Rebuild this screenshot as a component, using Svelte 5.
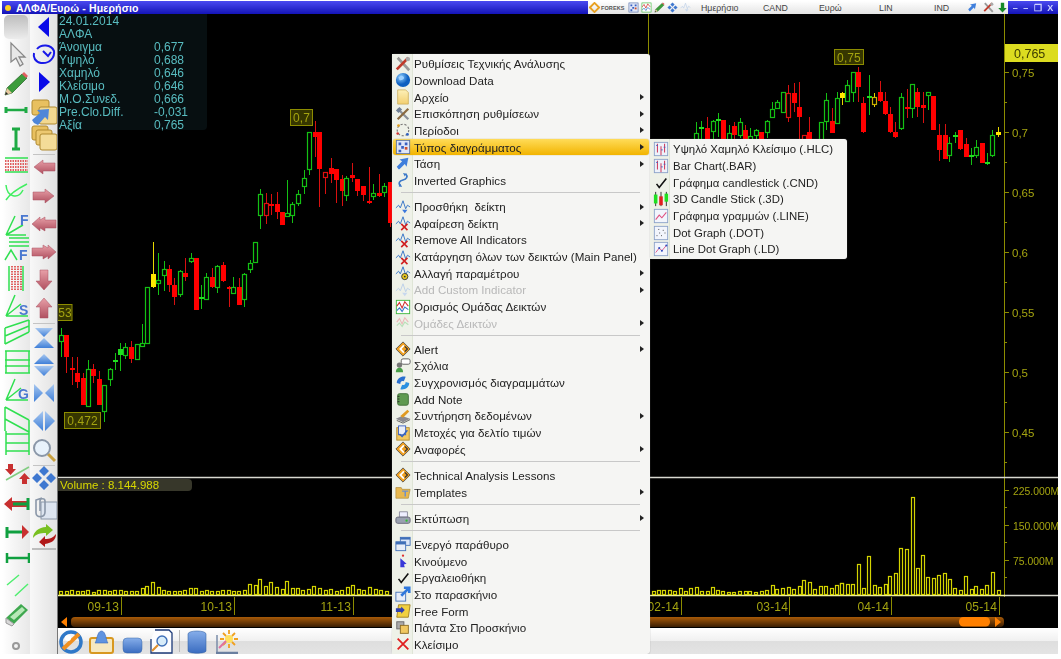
<script>
  const c1 = [
    [4,685,770,706,722,'g'],[20,705,818,705,770,'R'],[37,770,855,805,809,'R'],[53,770,865,820,846,'R'],[70,818,915,834,914,'R'],[85,780,920,808,918,'g'],[101,792,850,808,828,'R'],[117,812,915,838,914,'R'],[134,855,965,856,932,'g'],[150,805,858,808,838,'g'],[165,758,810,780,785,'G'],[182,728,813,748,766,'G'],[197,730,778,742,766,'g'],[215,722,788,742,778,'R'],[231,732,778,733,777,'g'],[248,672,740,730,738,'g'],[261,562,730,562,730,'g'],[280,425,565,522,560,'Y'],[296,460,585,541,549,'g'],[312,484,572,508,524,'g'],[329,495,575,508,555,'R'],[342,535,615,555,590,'R'],[360,510,590,512,582,'g'],[376,475,543,520,530,'R'],[393,460,490,474,483,'g'],[409,474,630,474,630,'R'],[424,555,628,592,596,'G'],[440,518,598,531,596,'g'],[456,505,565,531,560,'R'],[473,495,580,497,560,'g'],[490,486,545,496,544,'R'],[507,558,622,561,568,'R'],[521,530,582,562,580,'g'],[537,535,616,561,616,'R'],[554,520,620,523,596,'g'],[570,480,520,489,508,'g'],[587,425,485,425,485,'g'],[601,268,388,283,346,'g'],[618,278,372,310,346,'r'],[635,282,346,311,317,'R'],[651,275,358,311,335,'R'],[668,335,375,336,375,'R'],[682,240,350,340,349,'g'],[698,305,368,313,346,'g'],[715,270,318,283,310,'g'],[732,210,282,233,259,'g'],[748,97,224,97,207,'g'],[765,63,170,97,112,'R'],[779,97,322,97,207,'R'],[796,216,282,217,232,'r'],[813,174,250,203,221,'R'],[829,207,308,208,240,'R'],[846,225,318,238,274,'R'],[860,228,302,233,285,'g'],[877,188,245,226,234,'R'],[893,238,288,238,274,'R'],[910,258,302,258,285,'R'],[927,202,312,303,310,'R'],[940,252,300,278,288,'g'],[957,222,292,278,288,'R'],[973,248,292,258,276,'g'],[990,246,382,246,368,'R']
  ];
  const c2 = [
    [140,215,270,248,270,'g'],[155,212,270,230,234,'G'],[173,200,270,235,270,'R'],[190,210,270,214,242,'g'],[205,188,260,206,209,'G'],[221,210,270,210,270,'R'],[237,225,270,250,270,'g'],[254,215,270,227,255,'R'],[270,205,265,217,255,'g'],[287,225,270,240,270,'R'],[302,235,270,258,270,'g'],[318,238,270,240,254,'g'],[335,245,270,247,270,'R'],[351,210,265,212,246,'g'],[368,155,200,178,200,'g'],[381,150,175,155,173,'g'],[399,125,190,127,186,'g'],[415,105,215,128,200,'r'],[432,100,185,128,158,'R'],[449,95,270,172,200,'R'],[462,255,270,256,270,'r'],[479,200,270,247,270,'R'],[513,215,270,216,270,'g'],[529,130,240,150,212,'g'],[546,175,250,213,248,'R'],[561,125,220,145,220,'g'],[576,125,165,128,143,'Y'],[593,90,152,106,152,'g'],[609,65,155,67,127,'g'],[626,50,155,65,110,'R'],[640,140,250,160,246,'R'],[657,75,195,139,142,'G'],[674,130,172,140,162,'y'],[690,92,155,127,154,'R'],[707,125,195,154,192,'R'],[720,170,250,192,245,'R'],[737,215,265,247,262,'R'],[754,130,240,142,233,'g'],[771,118,205,172,176,'R'],[788,102,205,103,173,'g'],[803,115,200,127,172,'R'],[819,125,220,166,173,'R'],[835,127,180,127,136,'g'],[851,138,240,138,240,'R'],[868,222,332,256,301,'R'],[885,222,325,256,326,'R'],[899,262,335,280,315,'g'],[915,245,280,255,262,'G'],[932,240,300,241,298,'R'],[948,265,320,281,320,'R'],[965,295,345,316,320,'G'],[980,270,325,292,315,'g'],[996,280,338,280,338,'R'],[1013,310,345,336,342,'G'],[1028,240,320,256,315,'g'],[1046,230,262,247,255,'Y']
  ];
  const conv = (a, ox, oy) => a.map(([x, hi, lo, t, b, k]) => ({
    x: Math.floor(ox + x / 3) + 0.5,
    hi: Math.round(oy + hi / 3), lo: Math.round(oy + lo / 3),
    t: Math.round(oy + t / 3), b: Math.round(oy + b / 3), k
  }));
  const candles = [...conv(c1, 60, 100), ...conv(c2, 650, 50)];

  const v1 = [[183,3],[200,3],[216,4],[233,3],[248,3],[264,4],[281,2],[297,4],[315,4],[330,3],[345,4],[362,4],[378,3],[395,3],[411,3],[429,6],[442,8],[459,12],[476,7],[492,4],[508,3],[524,3],[540,3],[556,4],[573,6],[589,6],[605,3],[620,4],[636,3],[653,3],[669,4],[686,4],[701,3],[717,3],[734,4],[750,10],[767,9],[781,15],[798,8],[814,12],[831,7],[848,5],[862,13],[878,6],[893,6],[910,4],[926,5],[943,8],[960,6],[977,4],[993,5],[1010,3],[1026,4],[1043,7],[1060,9],[1077,5],[1093,4],[1110,7],[1127,5],[1143,4],[1160,3]];
  const v2 = [[12,3],[28,4],[42,4],[60,4],[76,3],[92,6],[109,3],[123,6],[140,7],[156,3],[174,3],[190,7],[204,4],[220,3],[237,2],[253,2],[270,3],[287,3],[301,3],[318,2],[335,3],[351,4],[368,9],[382,5],[399,6],[416,7],[432,5],[449,8],[462,14],[479,12],[495,5],[513,8],[529,8],[546,6],[560,9],[576,11]];
  const v3 = [[7,11],[23,10],[39,10],[57,30],[71,6],[87,38],[104,9],[120,7],[137,10],[150,18],[168,21],[184,46],[201,45],[218,97],[234,26],[248,39],[265,17],[282,16],[298,19],[315,21],[329,15],[345,6],[362,4],[379,18],[395,5],[409,8],[426,5],[442,9],[459,22],[476,4]];
  const bars = [
    ...v1.map(([x, h]) => ({ x: Math.round(x / 3), h })),
    ...v2.map(([x, h]) => ({ x: Math.round(650 + x / 3), h })),
    ...v3.map(([x, h]) => ({ x: Math.round(840 + x / 3), h }))
  ];

  const priceAxis = [[72,'0,75'],[132,'0,7'],[192,'0,65'],[252,'0,6'],[312,'0,55'],[372,'0,5'],[432,'0,45']];
  const volAxis = [[490,'225.000M'],[525,'150.000M'],[560,'75.000M']];
  const minor = [102,162,222,282,342,402,462,507,542,577];
  const dates = [[119,121,'09-13'],[232,234,'10-13'],[351,353,'11-13'],[679,681,'02-14'],[788,789,'03-14'],[889,891,'04-14'],[997,999,'05-14']];

  const info = [['24.01.2014',''],['ΑΛΦΑ',''],['Άνοιγμα','0,677'],['Υψηλό','0,688'],['Χαμηλό','0,646'],['Κλείσιμο','0,646'],['Μ.Ο.Συνεδ.','0,666'],['Pre.Clo.Diff.','-0,031'],['Αξία','0,765']];

  const wave = '<path d="M1 10l3-3 2 3 3-8 3 9 2-4 3 2" fill="none" stroke="#3a78c8" stroke-width="1.1"/>';
  const diamond = '<path d="M9 1l8 8-8 8-8-8z" fill="#f0a020" stroke="#333" stroke-width=".8"/><path d="M10 5L6 9l4 4" fill="none" stroke="#fff" stroke-width="2"/><path d="M11 6l3 3-3 3" fill="none" stroke="#333" stroke-width="1.4"/>';
  const barsIcon = '<rect x="1.5" y="1.5" width="15" height="15" fill="#eef2fa" stroke="#8aa0c8"/><path d="M5 3v10M9 6v10M13 3v10" stroke="#d04060" stroke-width="1.2"/><path d="M3.500 5h2M9 10h2M12 7h2" stroke="#4060c0"/>';
  const icons = {
    tools: '<path d="M3 2l13 14" stroke="#999" stroke-width="3"/><path d="M15 2L2 15" stroke="#c03a2a" stroke-width="3"/><circle cx="14.500" cy="3.500" r="2.500" fill="#aaa"/>',
    globe: '<circle cx="9" cy="9" r="8" fill="url(#gGlobe)"/><path d="M4 6c3-3 5-2 6 0s-3 4-5 3z" fill="#9cd0ff"/>',
    file: '<path d="M3 1h9l3 3v13H3z" fill="url(#gFile)" stroke="#c8a850" stroke-width=".8"/>',
    tools2: '<path d="M3 3l12 12" stroke="#8a8f98" stroke-width="2.500"/><path d="M15 3L3 15" stroke="#8a6a40" stroke-width="2.500"/><path d="M1 5l4-4 3 3-4 4z" fill="#6f7f95"/>',
    period: '<circle cx="9" cy="9" r="6.500" fill="none" stroke="#777" stroke-width="1.300" stroke-dasharray="2.500 2"/><circle cx="4" cy="4" r="1.600" fill="#e0a020"/><circle cx="14" cy="14" r="1.600" fill="#3060c0"/><circle cx="3" cy="13" r="1.400" fill="#d03030"/>',
    chart: '<rect x="1.500" y="1.500" width="15" height="15" fill="#dfe6f8" stroke="#5570a8"/><path d="M4 4h3v3H4zM11 4h3v3h-3zM7 8h3v3H7zM4 12h3v3H4z" fill="#3a60c0"/><path d="M11 9h3v3h-3z" fill="#d05030"/>',
    arrow: '<path d="M4 15l-2-3 6-6-3-2 10-2-2 10-2-3-6 6z" fill="#3f7fdc"/>',
    invert: '<path d="M12 2c3 3 1 6-3 7s-6 4-3 7" fill="none" stroke="#3a78c8" stroke-width="1.800"/><path d="M9 1l4 1-2 3zM8 17l-4-1 2-3z" fill="#3a78c8"/>',
    indAdd: wave + '<path d="M11 16l-3-4h6z" fill="#3a78dc"/>',
    indX: wave + '<path d="M7 10l7 7M14 10l-7 7" stroke="#d02020" stroke-width="1.800"/>',
    indGear: wave + '<circle cx="11" cy="13" r="3.500" fill="#e8c820" stroke="#333"/><circle cx="11" cy="13" r="1" fill="#333"/>',
    indGray: '<path d="M1 10l3-3 2 3 3-8 3 9 2-4 3 2" fill="none" stroke="#bcd0e8" stroke-width="1.100"/><path d="M11 16l-3-4h6z" fill="#c8d8ee"/>',
    group: '<rect x="1.500" y="1.500" width="15" height="15" fill="#fff" stroke="#3ab83a"/><path d="M2 8l3-4 3 6 3-7 4 5" fill="none" stroke="#d03030" stroke-width="1.200"/><path d="M2 13l3-3 3 4 3-5 4 3" fill="none" stroke="#3a78c8" stroke-width="1.200"/>',
    groupGray: '<path d="M2 8l3-4 3 6 3-7 4 5" fill="none" stroke="#eab8b8" stroke-width="1.200"/><path d="M2 12l3-3 3 4 3-5 4 3" fill="none" stroke="#b8e0b8" stroke-width="1.200"/>',
    alert: diamond,
    chat: '<rect x="7" y="1" width="10" height="6" rx="2" fill="#fff" stroke="#555"/><circle cx="5" cy="8" r="3" fill="#777"/><path d="M1 16c0-4 2-5 4-5s4 1 4 5z" fill="#48a048"/>',
    sync: '<path d="M2 9c0-5 5-8 10-7l-2 5C7 6 6 8 6 10z" fill="#2a70d0"/><path d="M16 9c0 5-5 8-10 7l2-5c3 1 4-1 4-3z" fill="#2a90e0"/>',
    note: '<rect x="3" y="3" width="12" height="13" rx="2" fill="#5f9a50" stroke="#3d6c35"/><path d="M3 6h2M3 9h2M3 12h2" stroke="#222"/>',
    maint: '<path d="M1 12l7-3 9 3-8 4z" fill="#8a8a90"/><path d="M6 9l8-7 2 2-7 7z" fill="#e09a20"/><path d="M2 14l7 3 8-4" fill="none" stroke="#555"/>',
    check2: '<rect x="2" y="3" width="14" height="14" fill="#f2c860" stroke="#b08a30"/><rect x="4" y="1" width="8" height="10" fill="#e8eefa" stroke="#3a60c0"/><path d="M5 10l3 3 6-7" fill="none" stroke="#3060c0" stroke-width="1.600"/>',
    folder: '<path d="M1 4h6l1 2h9l-2 10H1z" fill="#e8b850" stroke="#a88430" stroke-width=".7"/><path d="M8 8h7M11.500 8v6" stroke="#6a8fd0" stroke-width="1.600"/>',
    print: '<path d="M5 2h9v6H5z" fill="#eef"  stroke="#889"/><rect x="1" y="8" width="16" height="7" rx="2" fill="#9aa2b0" stroke="#667"/><circle cx="13" cy="12" r="1.300" fill="#30c030"/>',
    win: '<rect x="6" y="1.500" width="11" height="9" fill="#dbe6f8" stroke="#3f6fb8"/><rect x="6" y="1.500" width="11" height="2.500" fill="#3f6fb8"/><rect x="1" y="6.500" width="11" height="10" fill="#e8eef9" stroke="#3f6fb8"/><rect x="1" y="6.500" width="11" height="3" fill="#3f6fb8"/>',
    move: '<path d="M6 16V6l7 6-3 1 1 3z" fill="#3838d8"/><circle cx="9" cy="3" r="1.300" fill="#e03030"/>',
    check: '<path d="M4 10l3 4 8-10" fill="none" stroke="#111" stroke-width="1.800"/>',
    bg: '<rect x="1" y="7" width="11" height="10" fill="#e8eef9" stroke="#3f6fb8"/><path d="M7 11L15 3M10 2h6v6" fill="none" stroke="#2f78dc" stroke-width="3"/>',
    free: '<path d="M4 2h13l-2 14H2z" fill="#f0d040" stroke="#a08020"/><path d="M1 6h6v-2l4 4-4 4v-2H1z" fill="#3040b0"/>',
    front: '<rect x="2" y="2" width="8" height="8" fill="#aaa" stroke="#666"/><rect x="6" y="6" width="9" height="9" fill="#f0c860" stroke="#8a6a20"/>',
    close: '<path d="M3 3l12 12M15 3L3 15" stroke="#e02020" stroke-width="2"/>',
    hlc: barsIcon,
    candle: '<path d="M3 1v16M9 1v16M15 1v16" stroke="#222"/><rect x="1" y="4" width="4" height="10" fill="#20e020"/><rect x="7" y="6" width="4" height="10" fill="#e02020"/><rect x="13" y="3" width="4" height="9" fill="#20e020"/>',
    line: '<rect x="1.500" y="1.500" width="15" height="15" fill="#f2f5fc" stroke="#8aa0c8"/><path d="M3 13l4-5 3 3 5-6" fill="none" stroke="#e05080" stroke-width="1.200"/>',
    dot: '<rect x="1.500" y="1.500" width="15" height="15" fill="#f2f5fc" stroke="#8aa0c8"/><path d="M4 12h1M7 9h1M9 12h1M11 6h1M13 9h1M6 5h1" stroke="#333" stroke-dasharray="1 1"/>',
    lined: '<rect x="1.500" y="1.500" width="15" height="15" fill="#f2f5fc" stroke="#8aa0c8"/><path d="M3 13l4-5 3 3 5-6" fill="none" stroke="#e05080"/><circle cx="7" cy="8" r="1.200" fill="#3050c0"/><circle cx="10" cy="11" r="1.200" fill="#3050c0"/><circle cx="15" cy="5" r="1.200" fill="#3050c0"/>',

    blank: '<rect x="1" y="1" width="24" height="24" rx="5" fill="url(#gBlank)"/>',
    cursor: '<path d="M8 1v19l5-4 4 8 3-2-4-7h6z" fill="#e8e8e8" stroke="#888" stroke-width="1.300"/>',
    pencil: '<path d="M2 24l2-7L19 3l5 4-15 15z" fill="#3c9c3c" stroke="#1f5f1f" stroke-width=".7"/><path d="M19 3l2-2 4 4-2 2z" fill="#e06060"/><path d="M2 24l2-7 5 5z" fill="#e8c8a0"/><path d="M2 24l1-3 2 2z" fill="#222"/>',
    hbar: '<path d="M3 13h20" stroke="#1eaa44" stroke-width="2.500"/><path d="M3 10v6M23 10v6" stroke="#1eaa44" stroke-width="3"/>',
    vbar: '<path d="M13 2v22" stroke="#1eaa44" stroke-width="3"/><path d="M9 3h8M9 23h8" stroke="#1eaa44" stroke-width="3"/>',
    grid: '<path d="M2 6h23M2 20h23" stroke="#30e050" stroke-width="1.500"/><path d="M2 9h23M2 12h23M2 15h23M2 18h23" stroke="#e06060" stroke-width="1.800" stroke-dasharray="1.500 1"/>',
    curves: '<path d="M3 5c1 12 12 15 17 5M3 20C8 12 18 7 24 4" fill="none" stroke="#40ee60" stroke-width="1.500"/>',
    fan: '<path d="M3 24L12 5M3 24L20 14M3 24h20" fill="none" stroke="#30e050" stroke-width="1.500"/><text x="17" y="14" class="ico-l">F</text>',
    afib: '<path d="M6 2h20M6 6h20M6 10h20" stroke="#30e050" stroke-width="1.500"/><path d="M2 24l6-10 6 10" fill="none" stroke="#30e050" stroke-width="1.500"/><text x="16" y="24" class="ico-l">F</text>',
    dotsv: '<path d="M6 1v25M20 1v25" stroke="#30e050" stroke-width="1.500"/><path d="M9 1v25M12 1v25M15 1v25M18 1v25" stroke="#e06060" stroke-width="2" stroke-dasharray="1.500 1"/>',
    fanS: '<path d="M3 24L12 3M3 24L18 12M3 24h22" fill="none" stroke="#30e050" stroke-width="1.500"/><text x="16" y="23" class="ico-l">S</text>',
    chan: '<path d="M2 8L26 0M2 24L26 12M2 8v16M26 0v12M2 16L26 6" fill="none" stroke="#30e050" stroke-width="1.500"/>',
    hgrid: '<path d="M2 3h25M2 12h25M2 18h25M2 25h25M3 3v22M26 3v22" fill="none" stroke="#30e050" stroke-width="1.500"/>',
    fanG: '<path d="M3 24L12 3M3 24L18 12M3 24h22" fill="none" stroke="#30e050" stroke-width="1.500"/><text x="15" y="23" class="ico-l">G</text>',
    chan2: '<path d="M2 2l24 13M2 14l24 13M2 2v24M26 15v11" fill="none" stroke="#30e050" stroke-width="1.500"/>',
    ladder: '<path d="M3 1v24M26 1v24M3 4h23M3 13h23M3 21h23" fill="none" stroke="#30e050" stroke-width="1.500"/>',
    rgdiag: '<path d="M3 19L26 6" stroke="#80cc80" stroke-width="1.500"/><path d="M5 3h5v5h3l-5.500 6L2 8h3z" fill="#c83030"/><path d="M19 23h5v-5h3l-5.500-6-5.500 6h3z" fill="#c83030"/>',
    redI: '<path d="M1 13l8-7v4h16v6H9v4z" fill="#c83030"/><path d="M25 7v12" stroke="#10a040" stroke-width="3"/><path d="M10 13h15" stroke="#10a040" stroke-width="3"/>',
    greenI: '<path d="M26 13l-7-7v14z" fill="#c83030"/><path d="M4 8v11M4 13h15" stroke="#10a040" stroke-width="3"/>',
    hbar2: '<path d="M4 13h22" stroke="#10a040" stroke-width="2.500"/><path d="M4 8v10M26 8v10" stroke="#10a040" stroke-width="2.500"/>',
    diag: '<path d="M4 12L16 2M12 23L25 11" stroke="#50ee70" stroke-width="1.500"/>',
    eraser: '<path d="M3 17L18 3l7 6-14 14z" fill="#3fa84f"/><path d="M3 17l8 6-2 2-6-3z" fill="#d8d8d8" stroke="#999"/><path d="M7 16L19 6l3 3-11 10z" fill="#b8e8b8"/>',
    dotc: '<circle cx="13" cy="13" r="3" fill="none" stroke="#999" stroke-width="2"/>',

    tl: '<path d="M18 3v20L7 13z" fill="#0a0ae8"/>',
    loop: '<path d="M6 7c4-5 14-5 17 2 1 6-4 13-13 12-6-1-8-6-7-10" fill="none" stroke="#1818e8" stroke-width="2"/><path d="M12 9l5 5 3-4" fill="none" stroke="#1818e8" stroke-width="2"/>',
    tr: '<path d="M8 3v20l11-10z" fill="#0a0ae8"/>',
    fold1: '<rect x="1" y="1" width="17" height="15" rx="2" fill="#e8c060" stroke="#b08a30"/><rect x="8" y="8" width="18" height="17" rx="2" fill="#f2d890" stroke="#b08a30"/><path d="M3 24l-2-3 8-7-3-3 12-1-1 11-3-3-7 8z" fill="#4f86d8"/>',
    fold2: '<rect x="1" y="1" width="16" height="14" rx="2" fill="#e8c060" stroke="#b08a30"/><rect x="5" y="5" width="16" height="15" rx="2" fill="#ecc870" stroke="#b08a30"/><rect x="9" y="9" width="17" height="16" rx="2" fill="#f4dc98" stroke="#b08a30"/>',
    aL: '<path d="M3 13l9-7v3h12v8H12v3z" fill="url(#gRed)" stroke="#a85060" stroke-width=".5"/>',
    aR: '<path d="M23 13l-9-7v3H2v8h12v3z" fill="url(#gRed)" stroke="#a85060" stroke-width=".5"/>',
    aLL: '<path d="M1 13l8-7v3l5-3v3h11v8H14v3l-5-3v3z" fill="url(#gRed)" stroke="#a85060" stroke-width=".5"/>',
    aRR: '<path d="M25 13l-8-7v3l-5-3v3H1v8h11v3l5-3v3z" fill="url(#gRed)" stroke="#a85060" stroke-width=".5"/>',
    aD: '<path d="M13 23l-8-9h4V3h8v11h4z" fill="url(#gRed)" stroke="#a85060" stroke-width=".5"/>',
    aU: '<path d="M13 3l-8 9h4v11h8V12h4z" fill="url(#gRed)" stroke="#a85060" stroke-width=".5"/>',
    hour: '<path d="M4 3h18l-9 9z" fill="url(#gBlue)"/><path d="M3 23l10-10 10 10z" fill="url(#gBlue)"/>',
    dia: '<path d="M13 2l10 10H3z" fill="url(#gBlue)"/><path d="M3 14h20L13 24z" fill="url(#gBlue)"/>',
    bow: '<path d="M3 4l9 9-9 9z" fill="url(#gBlue)"/><path d="M23 4l-9 9 9 9z" fill="url(#gBlue)"/>',
    diaV: '<path d="M12 3v20L2 13z" fill="url(#gBlue)"/><path d="M14 3v20l10-10z" fill="url(#gBlue)"/>',
    mag: '<path d="M17 17l7 7" stroke="#c8a040" stroke-width="3"/><circle cx="11" cy="11" r="8" fill="#e8f2fb" stroke="#8a97a8" stroke-width="2"/>',
    cross: '<path d="M13 1l5 5-5 5-5-5zM13 15l5 5-5 5-5-5zM6 8l5 5-5 5-5-5zM20 8l5 5-5 5-5-5z" fill="#3f78d0"/>',
    clip: '<rect x="10" y="8" width="16" height="17" fill="#dde5f0" stroke="#8a97a8"/><path d="M11 4l-6 2v13c0 5 9 5 9-1V7c0-3-5-3-5 0v10" fill="none" stroke="#8a97a8" stroke-width="1.600"/>',
    swap: '<path d="M2 15c0-6 6-11 13-11V1l7 6-7 6v-3C9 10 5 11 2 15z" fill="#78c020"/><path d="M25 11c0 6-4 9-11 10v3l-6-5 6-6v3c5 0 8-1 11-5z" fill="#b01818"/><path d="M1 26h24" stroke="#999" stroke-width="1.200"/>'
  };
  const col1 = [['blank',26.5],['cursor',55],['pencil',84],['hbar',110],['vbar',139],['grid',165],['curves',193],['fan',224],['afib',249],['dotsv',278],['fanS',305],['chan',333],['hgrid',361],['fanG',389],['chan2',418],['ladder',443],['rgdiag',474],['redI',504],['greenI',532],['hbar2',558],['diag',586],['eraser',614],['dotc',646]];
  const col2 = [['tl',27],['loop',55],['tr',82],['fold1',112],['fold2',138],['aL',167],['aR',196],['aLL',224],['aRR',252],['aD',280],['aU',308],['hour',338],['dia',365],['bow',393],['diaV',421],['mag',450],['cross',478],['clip',507],['swap',536]];
  const slots = (arr) => arr.map(([n, c], i) => ({ n, mt: i === 0 ? c - 14 - 13 : c - arr[i - 1][1] - 26 }));
  const slots1 = slots(col1), slots2 = slots(col2);

  const menu = [
    { t: 'Ρυθμίσεις Τεχνικής Ανάλυσης', i: 'tools' },
    { t: 'Download Data', i: 'globe' },
    { t: 'Αρχείο', i: 'file', s: 1 },
    { t: 'Επισκόπηση ρυθμίσεων', i: 'tools2', s: 1 },
    { t: 'Περίοδοι', i: 'period', s: 1 },
    { t: 'Τύπος διαγράμματος', i: 'chart', s: 1, a: 1 },
    { t: 'Τάση', i: 'arrow', s: 1 },
    { t: 'Inverted Graphics', i: 'invert' },
    { sep: 1 },
    { t: 'Προσθήκη  δείκτη', i: 'indAdd', s: 1 },
    { t: 'Αφαίρεση δείκτη', i: 'indX', s: 1 },
    { t: 'Remove All Indicators', i: 'indX' },
    { t: 'Κατάργηση όλων των δεικτών (Main Panel)', i: 'indX' },
    { t: 'Αλλαγή παραμέτρου', i: 'indGear', s: 1 },
    { t: 'Add Custom Indicator', i: 'indGray', s: 1, d: 1 },
    { t: 'Ορισμός Ομάδας Δεικτών', i: 'group' },
    { t: 'Ομάδες Δεικτών', i: 'groupGray', s: 1, d: 1 },
    { sep: 1 },
    { t: 'Alert', i: 'alert', s: 1 },
    { t: 'Σχόλια', i: 'chat' },
    { t: 'Συγχρονισμός διαγραμμάτων', i: 'sync' },
    { t: 'Add Note', i: 'note' },
    { t: 'Συντήρηση δεδομένων', i: 'maint', s: 1 },
    { t: 'Μετοχές για δελτίο τιμών', i: 'check2' },
    { t: 'Αναφορές', i: 'alert', s: 1 },
    { sep: 1 },
    { t: 'Technical Analysis Lessons', i: 'alert' },
    { t: 'Templates', i: 'folder', s: 1 },
    { sep: 1 },
    { t: 'Εκτύπωση', i: 'print', s: 1 },
    { sep: 1 },
    { t: 'Ενεργό παράθυρο', i: 'win' },
    { t: 'Κινούμενο', i: 'move' },
    { t: 'Εργαλειοθήκη', i: 'check' },
    { t: 'Στο παρασκήνιο', i: 'bg' },
    { t: 'Free Form', i: 'free' },
    { t: 'Πάντα Στο Προσκήνιο', i: 'front' },
    { t: 'Κλείσιμο', i: 'close' }
  ];
  const sub = [
    { t: 'Υψηλό Χαμηλό Κλείσιμο (.HLC)', i: 'hlc' },
    { t: 'Bar Chart(.BAR)', i: 'hlc' },
    { t: 'Γράφημα candlestick (.CND)', i: 'check' },
    { t: '3D Candle Stick (.3D)', i: 'candle' },
    { t: 'Γράφημα γραμμών (.LINE)', i: 'line' },
    { t: 'Dot Graph (.DOT)', i: 'dot' },
    { t: 'Line Dot Graph (.LD)', i: 'lined' }
  ];
  const bottomIcons = ['gl', 'bell', 'box', 'doc', 'div', 'cyl', 'sun'];
  const bi = {
    gl: '<circle cx="12" cy="13" r="10" fill="none" stroke="#2f78c8" stroke-width="3.500"/><path d="M4 20L20 5" stroke="#f09020" stroke-width="4"/><circle cx="9" cy="9" r="3" fill="#fff"/>',
    bell: '<rect x="1" y="9" width="23" height="15" rx="2" fill="#f6e8c0" stroke="#d89820" stroke-width="2"/><path d="M6 14c2-2 2-12 6.500-12S17 12 19 14z" fill="#5f93e0" stroke="#3a68b8" stroke-width=".6"/>',
    box: '<rect x="4" y="9" width="19" height="15" rx="4" fill="url(#gCyl)" stroke="#3a68a8" stroke-width=".5"/>',
    doc: '<path d="M6 1h14l3 3v20H2V10" fill="#fdfdff" stroke="#1c3a78" stroke-width="1.300"/><circle cx="13" cy="12" r="5" fill="#d8ecfa" stroke="#3f6fb8" stroke-width="1.400"/><path d="M9 16l-6 6" stroke="#e09030" stroke-width="2.200"/>',
    cyl: '<path d="M3 5c0-4 18-4 18 0v17c0 3-18 3-18 0z" fill="url(#gCyl)" stroke="#3a68a8" stroke-width=".6"/>',
    sun: '<path d="M2 24V6" stroke="#7a8ca8" stroke-width="1.500"/><path d="M1 24h22" stroke="#6a7fa0" stroke-width="2.500"/><circle cx="14" cy="10" r="4" fill="#ffe060"/><path d="M14 1v4M14 15v4M5 10h4M19 10h4M8 4l3 3M20 4l-3 3M8 16l3-3M20 16l-3-3" stroke="#f0a020" stroke-width="1.800"/><path d="M4 19l7-7" stroke="#e070a0" stroke-width="2"/>'
  };
</script>

<div class="app">
  <header class="title">
    <div class="caption"><span class="led"></span><span>ΑΛΦΑ/Ευρώ - Ημερήσιο</span></div>
    <div class="tools">
      <span class="logo"><svg viewBox="0 0 12 12" class="ti"><path d="M6 1L1 6l5 5 5-5z" fill="none" stroke="#e8a020" stroke-width="2"/></svg><b>FOREKS</b></span>
      <svg viewBox="0 0 18 18" class="ti">{@html icons.chart}</svg>
      <svg viewBox="0 0 18 18" class="ti">{@html icons.group}</svg>
      <svg viewBox="0 0 26 26" class="ti">{@html icons.pencil}</svg>
      <svg viewBox="0 0 26 26" class="ti">{@html icons.cross}</svg>
      <svg viewBox="0 0 18 18" class="ti">{@html icons.indGray}</svg>
      <span class="tt t1">Ημερήσιο</span><span class="tt t2">CAND</span><span class="tt t3">Ευρώ</span><span class="tt t4">LIN</span><span class="tt t5">IND</span>
      <svg viewBox="0 0 18 18" class="ti r1">{@html icons.arrow}</svg>
      <svg viewBox="0 0 18 18" class="ti r2">{@html icons.tools}</svg>
      <svg viewBox="0 0 26 26" class="ti r3"><path d="M13 25l-10-11h6V2h8v12h6z" fill="#168a28"/></svg>
    </div>
    <div class="winbtns"><span>–</span><span>–</span><span class="rs">❐</span><span>X</span></div>
  </header>

  <div class="body">
    <aside class="col c1">
      {#each slots1 as s}
        <svg class="tb" viewBox="0 0 26 26" style:margin-top="{s.mt}px">{@html icons[s.n]}</svg>
      {/each}
    </aside>
    <aside class="col c2">
      {#each slots2 as s}
        <svg class="tb" viewBox="0 0 26 26" style:margin-top="{s.mt}px">{@html icons[s.n]}</svg>
      {/each}
      <i class="csep s1"></i><i class="csep s2"></i><i class="csep s3"></i>
    </aside>

    <main class="main">
      <div class="chart">
        <svg class="plot" viewBox="58 14 1000 614" width="1000" height="614">
          <defs>
            <linearGradient id="gBlank" x1="0" y1="0" x2="0" y2="1"><stop offset="0" stop-color="#bdbdbd"/><stop offset="1" stop-color="#ececec"/></linearGradient>
            <radialGradient id="gGlobe" cx=".35" cy=".3"><stop offset="0" stop-color="#8fd0ff"/><stop offset="1" stop-color="#0d5fc0"/></radialGradient>
            <linearGradient id="gFile" x1="0" y1="0" x2="0" y2="1"><stop offset="0" stop-color="#fdf0b8"/><stop offset="1" stop-color="#f2cf70"/></linearGradient>
            <linearGradient id="gRed" x1="0" y1="0" x2="0" y2="1"><stop offset="0" stop-color="#e8a0a8"/><stop offset="1" stop-color="#b05060"/></linearGradient>
            <linearGradient id="gBlue" x1="0" y1="0" x2="0" y2="1"><stop offset="0" stop-color="#a8c8f0"/><stop offset="1" stop-color="#3f7fd8"/></linearGradient>
            <linearGradient id="gCyl" x1="0" y1="0" x2="0" y2="1"><stop offset="0" stop-color="#86aeea"/><stop offset="1" stop-color="#3a6cc0"/></linearGradient>
            <linearGradient id="gScroll" x1="0" y1="0" x2="0" y2="1"><stop offset="0" stop-color="#a85a08"/><stop offset="1" stop-color="#3a1e04"/></linearGradient>
          </defs>
          <path d="M648.500 14v50" class="ol"/>
          <path d="M1004.500 14v583" class="ol"/>
          {#each candles as c}
            <path d="M{c.x} {c.hi}V{c.lo}" class="w {c.k}"/>
            {#if c.k === 'g' || c.k === 'r' || c.k === 'y'}
              <rect x={c.x - 2} y={c.t + .5} width="4" height={Math.max(c.b - c.t, 2)} class="o {c.k}"/>
            {:else}
              <rect x={c.x - 2.5} y={c.t} width="5" height={Math.max(c.b - c.t, 2)} class="f {c.k}"/>
            {/if}
          {/each}

          <path d="M58 477.500h1000" class="wl"/>
          <path d="M1004.500 595.500h54" class="wl"/>
          <path d="M58 595.500h947" class="bl"/>
          {#each bars as b}
            <rect x={b.x - 1.5} y={594.5 - b.h} width="3" height={b.h} class="vb"/>
          {/each}

          {#each priceAxis as [y, t]}
            <path d="M1004 {y}.5h5" class="ol"/>
            <text x="1012" y={y + 4.5} class="ax ps">{t}</text>
          {/each}
          {#each volAxis as [y, t]}
            <path d="M1004 {y}.5h5" class="ol"/>
            <text x="1013" y={y + 4.5} class="ax vs">{t}</text>
          {/each}
          {#each minor as y}
            <path d="M1004 {y}.5h3" class="ol"/>
          {/each}
          <rect x="1005" y="44" width="53" height="18" class="pl"/>
          <text x="1014" y="57.500" class="plt">0,765</text>

          {#each dates as [x, tx, t]}
            <text x={x} y="611" class="ax end">{t}</text>
            <path d="M{tx + .5} 597v18" class="ol"/>
          {/each}

          <path d="M67 617v10l-6-5z" class="orng"/>
          <rect x="71" y="617" width="933" height="10" rx="4" fill="url(#gScroll)" />
          <rect x="959" y="617" width="31" height="9.500" rx="4.500" class="orng"/>
          <path d="M995 617v10l6-5z" class="orng"/>

          <rect x="290.500" y="109.500" width="22" height="16" class="tag"/>
          <text x="301.500" y="122" class="tt2">0,7</text>
          <rect x="834.500" y="49.500" width="29" height="15" class="tag"/>
          <text x="849" y="61.500" class="tt2">0,75</text>
          <rect x="50" y="304.500" width="22" height="16" class="tag"/>
          <text x="65" y="317" class="tt2">53</text>
          <rect x="64.500" y="412.500" width="36" height="16" class="tag"/>
          <text x="82.500" y="425" class="tt2">0,472</text>
        </svg>

        <div class="info">
          {#each info as [a, b]}
            <div class="irow"><span class="il">{a}</span><span>{b}</span></div>
          {/each}
        </div>
        <div class="volume">Volume : 8.144.988</div>

        <nav class="menu">
          {#each menu as m}
            {#if m.sep}
              <div class="sp"></div>
            {:else}
              <div class="row" class:active={m.a} class:dis={m.d}>
                <svg class="mi" viewBox="0 0 18 18">{@html icons[m.i]}</svg>
                <span class="lbl">{m.t}</span>
                {#if m.s}<span class="tri"></span>{/if}
              </div>
            {/if}
          {/each}
        </nav>

        <nav class="submenu">
          {#each sub as m}
            <div class="row sr">
              <svg class="mi" viewBox="0 0 18 18">{@html icons[m.i]}</svg>
              <span class="lbl">{m.t}</span>
            </div>
          {/each}
        </nav>
      </div>

      <footer class="bottom">
        {#each bottomIcons as n}
          {#if n === 'div'}
            <i class="bdiv"></i>
          {:else}
            <svg class="bi" viewBox="0 0 25 25">{@html bi[n]}</svg>
          {/if}
        {/each}
      </footer>
    </main>
  </div>
</div>

<style>
  :global(body) { margin: 0; background: #fff; }
  .app {
    width: 1056px; height: 653px; margin: 1px 0 0 2px;
    display: flex; flex-direction: column; overflow: hidden;
    font-family: "Liberation Sans", Arial, sans-serif;
    filter: blur(0.35px);
  }
  .title {
    height: 13px; flex: none; display: flex; align-items: stretch;
    background: linear-gradient(#4a4af0, #1414b8); color: #fff;
  }
  .caption {
    width: 586px; flex: none; display: flex; align-items: center; gap: 5px; padding-left: 3px; box-sizing: border-box;
    font-size: 10.500px; font-weight: bold; letter-spacing: .15px;
  }
  .led { width: 6px; height: 6px; border-radius: 50%; background: #ffd020; }
  .tools {
    width: 420px; flex: none; display: flex; align-items: center; gap: 2px; overflow: hidden;
    background: linear-gradient(#fff, #e4e4e4); color: #444; font-size: 9px; padding-left: 1px; box-sizing: border-box;
  }
  .ti { width: 11px; height: 11px; flex: none; }
  .logo { display: flex; align-items: center; gap: 1px; width: 37px; flex: none; }
  .logo b { font-size: 5.500px; color: #555; letter-spacing: .1px; }
  .tt { flex: none; font-size: 8.800px; color: #444; }
  .t1 { margin-left: 8px; width: 36px; } .t2 { margin-left: 24px; width: 24px; } .t3 { margin-left: 30px; width: 22px; }
  .t4 { margin-left: 36px; width: 14px; } .t5 { margin-left: 39px; width: 16px; }
  .r1 { margin-left: 15px; } .r2 { margin-left: 3px; } .r3 { margin-left: 1px; }
  .winbtns {
    flex: 1; display: flex; align-items: center; justify-content: space-around; padding: 0 2px;
    color: #cfd4ff; font-size: 9px; font-weight: bold;
  }
  .body { flex: 1; display: flex; min-height: 0; }
  .col {
    flex: none; display: flex; flex-direction: column; align-items: center; overflow: hidden; position: relative;
    box-sizing: border-box;
  }
  .c1 { width: 28px; background: linear-gradient(90deg, #fff, #e8e8e8); }
  .c2 { width: 28px; background: linear-gradient(90deg, #f8f8f8, #e2e2e2); border-right: 1px solid #777; }
  .tb { width: 26px; height: 26px; flex: none; overflow: visible; }
  .csep { position: absolute; left: 3px; width: 22px; height: 1px; background: #c4c4c4; }
  .s1 { top: 140px; } .s2 { top: 309px; } .s3 { top: 451px; }
  :global(.ico-l) { font: bold 14px "Liberation Sans", sans-serif; fill: #4a78d0; }

  .main { flex: 1; display: flex; flex-direction: column; min-width: 0; }
  .chart { flex: none; height: 614px; background: #000; position: relative; z-index: 1; }
  .plot { display: block; }
  .w { stroke-width: 1; fill: none; }
  .w.g, .w.G { stroke: #14c014; }
  .w.R, .w.r { stroke: #d81010; }
  .w.Y, .w.y { stroke: #e8d800; }
  .o { stroke-width: 1.200; }
  .o.g { stroke: #14c014; fill: #000; }
  .o.r { stroke: #e01010; fill: #000; }
  .o.y { stroke: #c8b000; fill: #000; }
  .f.R { fill: #ff0000; } .f.G { fill: #20e020; } .f.Y { fill: #ffe800; }
  .ol { stroke: #8c8c00; fill: none; }
  .wl { stroke: #d8d8d0; fill: none; stroke-width: 1.500; }
  .bl { stroke: #f0f0a0; stroke-width: 1.500; fill: none; }
  .vb { fill: #000; stroke: #d4d400; stroke-width: 1.200; }
  .ax { fill: #a4a410; font-size: 12px; letter-spacing: .15px; }
  .ps { font-size: 11.500px; letter-spacing: 0; }
  .vs { font-size: 10.400px; letter-spacing: 0; }
  .end { text-anchor: end; }
  .pl { fill: #dcdc20; }
  .plt { fill: #3c3c00; font-size: 12.500px; }
  .orng { fill: #ff8000; }
  .tag { fill: #363600; stroke: #8c8c00; }
  .tt2 { fill: #a4a410; font-size: 12px; text-anchor: middle; letter-spacing: .1px; }

  .info {
    position: absolute; left: 0; top: 0; width: 149px; height: 116px; background: #070f11; border-radius: 0 0 4px 0;
    color: #58bcc0; font-size: 12px; line-height: 13px; padding: 0 0 0 1px; box-sizing: border-box;
  }
  .irow { display: flex; height: 13px; position: relative; top: 0.5px; }
  .il { width: 95px; flex: none; }
  .volume {
    position: absolute; left: 0; top: 465px; width: 134px; height: 12px; background: #37372a; border-radius: 0 4px 4px 0;
    color: #d8d800; font-size: 11.500px; line-height: 12px; padding-left: 2px; box-sizing: border-box;
  }
  .menu, .submenu {
    position: absolute; background: #f5f5f3; border-radius: 3px; box-sizing: border-box;
    box-shadow: 0 0 1px #888; color: #222;
  }
  .menu { left: 334px; top: 40px; width: 258px; height: 600px; padding: 1.500px 1px 0; }
  .menu::before, .submenu::before {
    content: ""; position: absolute; left: 0; top: 0; bottom: 0; background: #eef1e8; border-right: 1px solid #dfe5d6;
  }
  .menu::before { width: 20px; }
  .submenu::before { width: 19px; }
  .submenu { left: 592px; top: 125px; width: 197px; height: 120px; padding: 2px 0 0 1px; }
  .row {
    height: 16.670px; display: flex; align-items: center; position: relative; font-size: 11.600px;
    letter-spacing: .03px; white-space: pre; border-radius: 3px;
  }
  .sr { font-size: 11.400px; }
  .mi { width: 16px; height: 16px; flex: none; margin-left: 2px; }
  .lbl { margin-left: 3px; flex: 1; }
  .sr .lbl { margin-left: 4px; }
  .dis { color: #b8b8b8; }
  .active { background: linear-gradient(#ffdc58, #f2b400); box-shadow: 0 0 1px #b08000; }
  .tri {
    width: 0; height: 0; border-left: 4px solid #222; border-top: 3.500px solid transparent; border-bottom: 3.500px solid transparent;
    margin-right: 5px;
  }
  .sp { height: 9.500px; position: relative; }
  .sp::after {
    content: ""; position: absolute; left: 8px; right: 9px; top: 3.500px; height: 1px; background: #c8c8c8;
  }
  .bottom {
    flex: 1; display: flex; align-items: center; gap: 5px; padding-left: 1px;
    background: linear-gradient(#ffffff, #f0f0f0 50%, #dedede 52%, #e4e4e4);
  }
  .bi { width: 25px; height: 25px; flex: none; }
  .bdiv { width: 1px; height: 22px; background: #bbb; }
</style>
